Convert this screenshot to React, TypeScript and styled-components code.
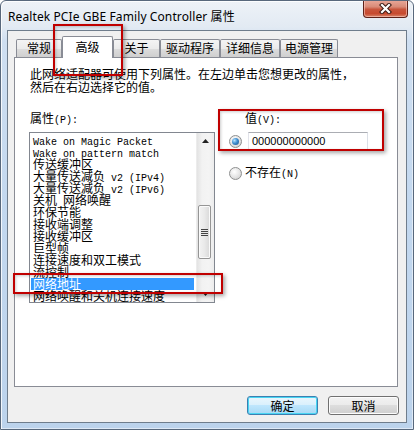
import React from "react";
import styled, { createGlobalStyle, css } from "styled-components";

const GlobalStyle = createGlobalStyle`
  html, body {
    margin: 0;
    padding: 0;
    background: #ffffff;
  }
  body {
    width: 414px;
    height: 430px;
    overflow: hidden;
    font-family: "Noto Sans CJK SC", "Liberation Sans", sans-serif;
    font-size: 12px;
    color: #000;
  }
`;

const CJK = /[\u3000-\u9fff\uff00-\uffef]+|[^\u3000-\u9fff\uff00-\uffef]+/g;
const isCJK = (s: string) => /[\u3000-\u9fff\uff00-\uffef]/.test(s);

const Mixed = ({ text }: { text: string }) => (
  <>
    {(text.match(CJK) || []).map((run, i) =>
      isCJK(run) ? <span key={i}>{run}</span> : <Latin key={i}>{run}</Latin>
    )}
  </>
);

const tabs = [
  { label: "常规", w: 46 },
  { label: "高级", w: 51, active: true },
  { label: "关于", w: 47 },
  { label: "驱动程序", w: 60 },
  { label: "详细信息", w: 60 },
  { label: "电源管理", w: 58 },
];

const items = [
  "Wake on Magic Packet",
  "Wake on pattern match",
  "传送缓冲区",
  "大量传送减负 v2 (IPv4)",
  "大量传送减负 v2 (IPv6)",
  "关机 网络唤醒",
  "环保节能",
  "接收端调整",
  "接收缓冲区",
  "巨型帧",
  "连接速度和双工模式",
  "流控制",
  "网络地址",
  "网络唤醒和关机连接速度",
];

const App = () => {
  return (
    <>
      <GlobalStyle />
      <Window>
        <TitleBar>
          <Title>Realtek PCIe GBE Family Controller 属性</Title>
          <CloseButton>
            <svg width="13" height="11" viewBox="0 0 13 11">
              <path d="M3 2 L10 9 M10 2 L3 9" stroke="#3c1a14" strokeWidth="4.2" strokeLinecap="square" />
              <path d="M3 2 L10 9 M10 2 L3 9" stroke="#ffffff" strokeWidth="2.2" strokeLinecap="square" />
            </svg>
          </CloseButton>
        </TitleBar>

        <Client>
          <TabRow>
            {tabs.map((t) => (
              <Tab key={t.label} $w={t.w} $active={!!t.active}>
                {t.label}
              </Tab>
            ))}
          </TabRow>

          <Panel>
            <Description>
              此网络适配器可使用下列属性。在左边单击您想更改的属性，
              <br />
              然后在右边选择它的值。
            </Description>

            <Columns>
              <LeftCol>
                <FieldLabel>
                  <Mixed text="属性(P):" />
                </FieldLabel>
                <ListBox>
                  <ListItems>
                    {items.map((it, i) => (
                      <ListItem key={i} $selected={it === "网络地址"}>
                        <Mixed text={it} />
                      </ListItem>
                    ))}
                  </ListItems>
                  <ScrollBar>
                    <ScrollArrow>
                      <svg width="7" height="4" viewBox="0 0 7 4">
                        <path d="M3.5 0 L7 4 L0 4 Z" fill="#222" />
                      </svg>
                    </ScrollArrow>
                    <Track>
                      <Thumb />
                    </Track>
                    <ScrollArrow>
                      <svg width="7" height="4" viewBox="0 0 7 4">
                        <path d="M0 0 L7 0 L3.5 4 Z" fill="#222" />
                      </svg>
                    </ScrollArrow>
                  </ScrollBar>
                </ListBox>
              </LeftCol>

              <RightCol>
                <ValueLabel>
                  <Mixed text="值(V):" />
                </ValueLabel>
                <RadioRow>
                  <Radio $checked />
                  <Edit>000000000000</Edit>
                </RadioRow>
                <RadioRow $gap={3} $top={14}>
                  <Radio />
                  <span>
                    <Mixed text="不存在(N)" />
                  </span>
                </RadioRow>
              </RightCol>
            </Columns>
          </Panel>

          <ButtonRow>
            <Button $default>确定</Button>
            <Button>取消</Button>
          </ButtonRow>
        </Client>

        <Callout $x={53} $y={24} $w={70} $h={52} />
        <Callout $x={218} $y={109} $w={166} $h={42} />
        <Callout $x={13} $y={273} $w={210} $h={21} />
      </Window>
    </>
  );
};

export default App;

const Window = styled.div`
  position: relative;
  width: 414px;
  height: 430px;
  box-sizing: border-box;
  border: 1px solid #58687c;
  border-radius: 6px 6px 0 0;
  background: linear-gradient(
    to bottom,
    #eef2f7 0px,
    #e2eaf3 26px,
    #cfdff1 40px,
    #c3d8ef 200px,
    #bcd3ec 100%
  );
  box-shadow: inset 1px 1px 0 rgba(255, 255, 255, 0.8),
    inset -1px -1px 0 rgba(255, 255, 255, 0.5);
  display: flex;
  flex-direction: column;
  overflow: hidden;
`;

const TitleBar = styled.div`
  height: 29px;
  display: flex;
  align-items: flex-start;
  justify-content: space-between;
`;

const Title = styled.div`
  font-family: "Noto Sans", "Noto Sans CJK SC", sans-serif;
  font-size: 12px;
  line-height: 16px;
  padding: 8px 0 0 7px;
  color: #000;
  letter-spacing: 0.1px;
`;

const CloseButton = styled.div`
  width: 45px;
  height: 18px;
  margin: -1px 5px 0 0;
  box-sizing: border-box;
  border: 1px solid #5e2118;
  border-top: none;
  border-radius: 0 0 4px 4px;
  background: linear-gradient(
    to bottom,
    #e9a99a 0%,
    #d98b78 40%,
    #c8553c 55%,
    #c74a2f 80%,
    #d7866b 100%
  );
  box-shadow: inset 0 0 0 1px rgba(255, 210, 200, 0.55);
  display: flex;
  align-items: center;
  justify-content: center;
`;

const Client = styled.div`
  margin: 0 6px 6px 6px;
  flex: 1;
  border: 1px solid #6f7d8c;
  background: #f0f0f0;
  display: flex;
  flex-direction: column;
`;

const TabRow = styled.div`
  position: relative;
  z-index: 2;
  height: 27px;
  margin-bottom: -1px;
  padding-left: 8px;
  display: flex;
  align-items: flex-end;
`;

const Tab = styled.div<{ $w: number; $active: boolean }>`
  width: ${(p) => p.$w}px;
  box-sizing: border-box;
  border: 1px solid #898c95;
  border-bottom: none;
  border-radius: 2px 2px 0 0;
  font-size: 12px;
  display: flex;
  justify-content: center;
  ${(p) =>
    p.$active
      ? css`
          height: 22px;
          background: #ffffff;
          padding-top: 2px;
          line-height: 16px;
        `
      : css`
          height: 18px;
          margin-bottom: 1px;
          line-height: 16px;
          background: linear-gradient(to bottom, #f4f4f4 0%, #ebebeb 50%, #dddddd 51%, #cfcfcf 100%);
        `}
`;

const Panel = styled.div`
  height: 330px;
  box-sizing: border-box;
  margin: 0 8px 0 6px;
  border: 1px solid #898c95;
  background: #ffffff;
  padding: 9px 0 0 14px;
`;

const Description = styled.div`
  font-size: 12px;
  line-height: 13px;
  padding-left: 1px;
  white-space: nowrap;
`;

const Columns = styled.div`
  margin-top: 18px;
  display: flex;
  gap: 14px;
  align-items: flex-start;
`;

const LeftCol = styled.div`
  width: 186px;
  display: flex;
  flex-direction: column;
`;

const FieldLabel = styled.div`
  font-size: 12px;
  line-height: 13px;
  padding-left: 1px;
  margin-bottom: 5px;
`;

const Latin = styled.span`
  font-family: "Liberation Mono", monospace;
  font-size: 10px;
  white-space: pre;
`;

const ListBox = styled.div`
  height: 171px;
  box-sizing: border-box;
  border: 1px solid #828790;
  display: flex;
  overflow: hidden;
`;

const ListItems = styled.div`
  flex: 1;
  padding-top: 1px;
  overflow: hidden;
`;

const ListItem = styled.div<{ $selected?: boolean }>`
  height: 12px;
  line-height: 12px;
  font-size: 12px;
  padding-left: 2px;
  margin: 0 2px 0 1px;
  white-space: nowrap;
  ${(p) =>
    p.$selected &&
    css`
      background: #3399ff;
      color: #ffffff;
    `}
`;

const ScrollBar = styled.div`
  width: 17px;
  display: flex;
  flex-direction: column;
  background: linear-gradient(to right, #e3e3e3 0%, #f2f2f2 30%, #f4f4f4 70%, #ececec 100%);
  border-left: 1px solid #ececec;
`;

const ScrollArrow = styled.div`
  height: 16px;
  display: flex;
  align-items: center;
  justify-content: center;
`;

const Track = styled.div`
  flex: 1;
  position: relative;
  padding-top: 56px;
`;

const Thumb = styled.div`
  width: 13px;
  height: 54px;
  margin-left: 1px;
  box-sizing: border-box;
  border: 1px solid #959595;
  border-radius: 2px;
  background: linear-gradient(to right, #f3f3f3 0%, #e9e9e9 50%, #d8d8d8 100%);
  box-shadow: inset 0 0 0 1px #fafafa;
  display: flex;
  align-items: center;
  justify-content: center;

  &::before {
    content: "";
    width: 7px;
    height: 7px;
    background: repeating-linear-gradient(
      to bottom,
      #444 0px,
      #444 1px,
      #e8e8e8 1px,
      #e8e8e8 2px
    );
  }
`;

const RightCol = styled.div`
  display: flex;
  flex-direction: column;
`;

const ValueLabel = styled.div`
  font-size: 12px;
  line-height: 13px;
  padding-left: 16px;
`;

const RadioRow = styled.div<{ $gap?: number; $top?: number }>`
  margin-top: ${(p) => p.$top ?? 5}px;
  display: flex;
  align-items: center;
  gap: ${(p) => p.$gap ?? 6}px;
  font-size: 12px;
  line-height: 13px;
`;

const Radio = styled.span<{ $checked?: boolean }>`
  position: relative;
  width: 13px;
  height: 13px;
  box-sizing: border-box;
  border-radius: 50%;
  border: 1px solid #8e8f8f;
  background: radial-gradient(circle at 40% 35%, #ffffff 0%, #e6e6e6 50%, #c9c9c9 100%);
  flex-shrink: 0;

  ${(p) =>
    p.$checked &&
    css`
      &::after {
        content: "";
        position: absolute;
        left: 2px;
        top: 2px;
        width: 7px;
        height: 7px;
        border-radius: 50%;
        background: radial-gradient(circle at 35% 35%, #b9e4ff 0%, #3f8ed0 45%, #1b4f86 100%);
      }
    `}
`;

const Edit = styled.div`
  width: 120px;
  height: 19px;
  box-sizing: border-box;
  border: 1px solid #e3e9ef;
  border-top-color: #abadb3;
  border-left-color: #e2e3ea;
  border-right-color: #dbdfe6;
  background: #ffffff;
  font-family: "Liberation Sans", sans-serif;
  font-size: 11px;
  line-height: 17px;
  padding-left: 3px;
`;

const ButtonRow = styled.div`
  flex: 1;
  display: flex;
  justify-content: flex-end;
  align-items: flex-start;
  gap: 10px;
  padding: 9px 7px 0 0;
`;

const Button = styled.div<{ $default?: boolean }>`
  width: 71px;
  height: 19px;
  box-sizing: border-box;
  border: 1px solid #707070;
  border-radius: 3px;
  font-size: 12px;
  line-height: 17px;
  text-align: center;
  background: linear-gradient(to bottom, #f2f2f2 0%, #ebebeb 49%, #dddddd 50%, #cfcfcf 100%);
  box-shadow: inset 0 0 0 1px #fcfcfc;
  ${(p) =>
    p.$default &&
    css`
      border-color: #3c7fb1;
      background: linear-gradient(to bottom, #eaf6fd 0%, #d9f0fc 49%, #bee6fd 50%, #a7d9f5 100%);
      box-shadow: inset 0 0 0 1px #48d5f2;
    `}
`;

const Callout = styled.div<{ $x: number; $y: number; $w: number; $h: number }>`
  position: absolute;
  left: ${(p) => p.$x - 1}px;
  top: ${(p) => p.$y - 1}px;
  width: ${(p) => p.$w}px;
  height: ${(p) => p.$h}px;
  box-sizing: border-box;
  border: 2px solid #c00000;
  box-shadow: 2px 2px 4px rgba(0, 0, 0, 0.35), inset 1px 1px 3px rgba(0, 0, 0, 0.2);
  z-index: 5;
  pointer-events: none;
`;
